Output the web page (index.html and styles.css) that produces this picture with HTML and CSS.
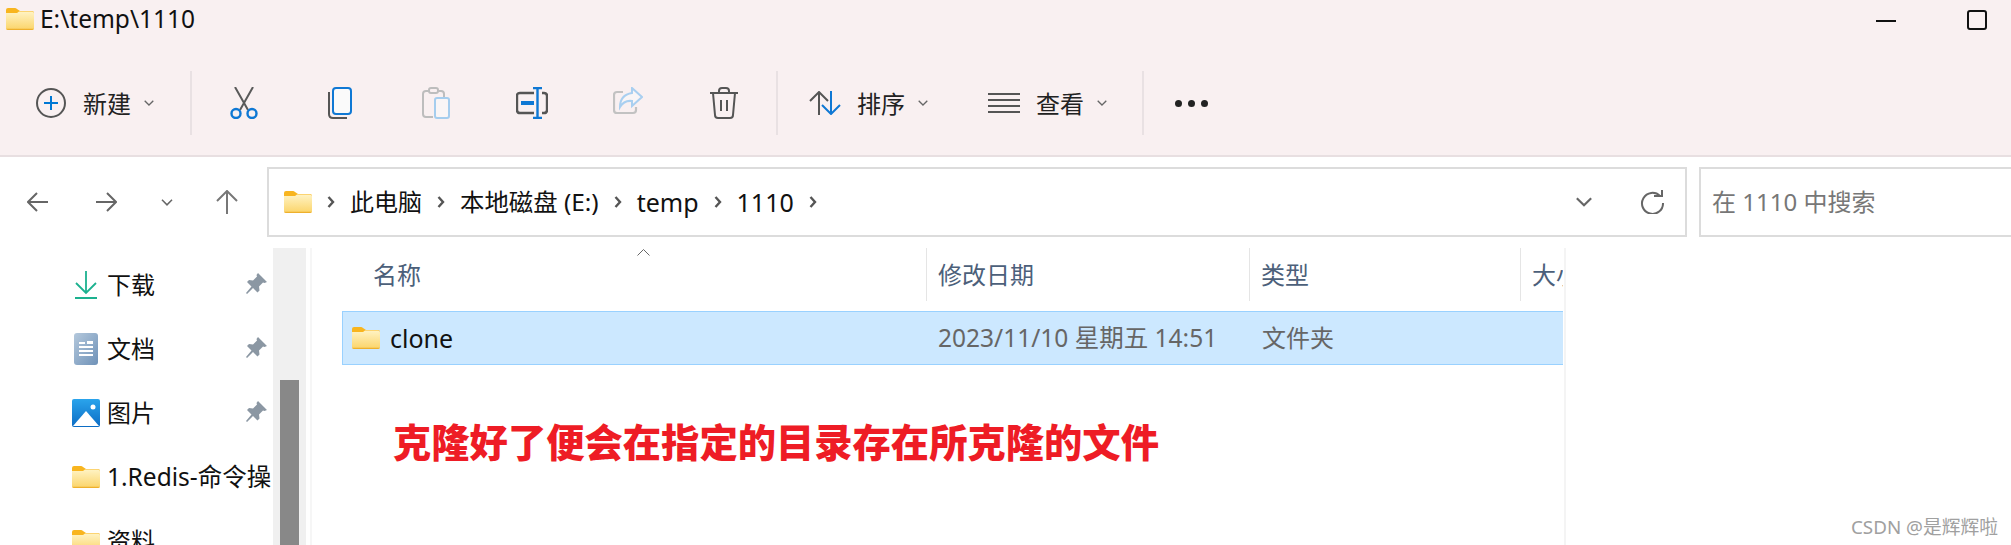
FILE: index.html
```html
<!DOCTYPE html>
<html lang="zh-CN">
<head>
<meta charset="utf-8">
<title>E:\temp\1110</title>
<link rel="stylesheet" href="styles.css">
</head>
<body>
<svg class="defs" width="0" height="0" aria-hidden="true">
  <defs>
    <linearGradient id="fg" x1="0" y1="0" x2="0" y2="1"><stop offset="0" stop-color="#fff3c4"/><stop offset="1" stop-color="#fbd468"/></linearGradient>
    <linearGradient id="dg" x1="0" y1="0" x2="1" y2="1"><stop offset="0" stop-color="#b4c8dc"/><stop offset="1" stop-color="#6f92b8"/></linearGradient>
    <linearGradient id="pg" x1="0" y1="0" x2="0" y2="1"><stop offset="0" stop-color="#2aa4ec"/><stop offset="1" stop-color="#0c6cc4"/></linearGradient>
    <symbol id="folder" viewBox="0 0 28 22">
      <path d="M0 2q0-2 2-2h7q1 0 2 1l3 2h12q2 0 2 2v3H0z" fill="#f8b51f"/>
      <path d="M0 5h11l2-1.500h13q2 0 2 2V20q0 2-2 2H2q-2 0-2-2z" fill="url(#fg)"/>
      <path d="M0 20.800h28V20q0 2-2 2H2q-2 0-2-2z" fill="#eeb02c"/>
    </symbol>
    <symbol id="pin" viewBox="0 0 22 22">
      <path d="M13 0l9 9-2.500 1-1.500-.5-4 4 .5 4-2 2-4.500-4.500L2 21l-1-1 5.500-6.500L2 9l2-2 4 .5 4-4-.5-1.500z" fill="#8b97a3"/>
    </symbol>
    <symbol id="chev" viewBox="0 0 10 6">
      <path d="M.7.7L5 5 9.300.7" fill="none" stroke="#666" stroke-width="1.300"/>
    </symbol>
    <symbol id="crumb" viewBox="0 0 8 12">
      <path d="M1.500 1l4.500 5-4.500 5" fill="none" stroke="#555" stroke-width="2.400"/>
    </symbol>
  </defs>
</svg>

<header class="ribbon">
  <div class="titlebar">
    <div class="title">
      <svg class="ic-folder"><use href="#folder"/></svg>
      <span>E:\temp\1110</span>
    </div>
    <div class="winctl">
      <span class="win-min"></span>
      <span class="win-max"></span>
    </div>
  </div>
  <div class="toolbar">
    <div class="tool-new">
      <svg width="30" height="30" viewBox="0 0 30 30"><circle cx="15" cy="15" r="14" fill="none" stroke="#555" stroke-width="2"/><path d="M15 8v14M8 15h14" stroke="#0078d4" stroke-width="2"/></svg>
      <span class="tool-label">新建</span>
      <svg class="tool-chev"><use href="#chev"/></svg>
    </div>
    <span class="tool-sep"></span>
    <div class="tool-icons">
      <span class="tool-cell"><svg width="28" height="32" viewBox="0 0 28 32"><path d="M5 0l13 23M23 0L10 23" fill="none" stroke="#5a5a5a" stroke-width="2"/><circle cx="6" cy="26.500" r="4.500" fill="none" stroke="#0f78d4" stroke-width="2.400"/><circle cx="22" cy="26.500" r="4.500" fill="none" stroke="#0f78d4" stroke-width="2.400"/></svg></span>
      <span class="tool-cell"><svg width="24" height="32" viewBox="0 0 24 32"><path d="M1 5v22q0 4 4 4h14" fill="none" stroke="#555" stroke-width="2"/><rect x="5" y="1" width="18" height="26" rx="3" fill="#fafafa" stroke="#0f78d4" stroke-width="2"/></svg></span>
      <span class="tool-cell"><svg width="28" height="32" viewBox="0 0 28 32"><path d="M11 30H4q-3 0-3-3V7q0-3 3-3h15q3 0 3 3v3" fill="none" stroke="#bdbdbd" stroke-width="2"/><rect x="7" y="1" width="9" height="5" rx="2" fill="#f9f0f1" stroke="#bdbdbd" stroke-width="2"/><rect x="13" y="11" width="14" height="20" rx="2" fill="#f9f5f6" stroke="#a5cdee" stroke-width="2"/></svg></span>
      <span class="tool-cell"><svg width="32" height="32" viewBox="0 0 32 32"><path d="M18 6H4q-3 0-3 3v14q0 3 3 3h14M26 6h2q3 0 3 3v14q0 3-3 3h-2" fill="none" stroke="#555" stroke-width="2.400"/><path d="M5 16h13" stroke="#0f78d4" stroke-width="4"/><path d="M17 1h9M21.500 1v30M17 31h9" fill="none" stroke="#0f78d4" stroke-width="2.400"/></svg></span>
      <span class="tool-cell"><svg width="30" height="28" viewBox="0 0 30 28"><path d="M10 5H4Q1 5 1 8v15q0 3 3 3h16q3 0 3-3v-3" fill="none" stroke="#c2c2c2" stroke-width="2.200"/><path d="M19 1l10 9-10 9v-5q-8-1-12 6 0-12 12-14z" fill="#f9f5f6" stroke="#a9cff0" stroke-width="2"/></svg></span>
      <span class="tool-cell"><svg width="30" height="32" viewBox="0 0 30 32"><path d="M1 6h28M10 6V4q0-3 3-3h4q3 0 3 3v2M4 6l2 22q0 3 3 3h12q3 0 3-3l2-22M12 13v11M18 13v11" fill="none" stroke="#555" stroke-width="2"/></svg></span>
    </div>
    <span class="tool-sep"></span>
    <div class="tool-sort">
      <svg width="32" height="24" viewBox="0 0 32 24"><path d="M10 24V1M1 10l9-9 9 9" fill="none" stroke="#555" stroke-width="2"/><path d="M22 0v23M13 14l9 9 9-9" fill="none" stroke="#0f78d4" stroke-width="2"/></svg>
      <span class="tool-label">排序</span>
      <svg class="tool-chev"><use href="#chev"/></svg>
    </div>
    <div class="tool-view">
      <svg width="32" height="20" viewBox="0 0 32 20"><path d="M0 1h32M0 7h32M0 13h32M0 19h32" stroke="#555" stroke-width="2"/></svg>
      <span class="tool-label">查看</span>
      <svg class="tool-chev"><use href="#chev"/></svg>
    </div>
    <span class="tool-sep tool-sep-end"></span>
    <div class="tool-more"><i></i><i></i><i></i></div>
  </div>
</header>

<nav class="navbar">
  <svg class="nav-back" width="21" height="20" viewBox="0 0 21 20"><path d="M21 10H2M10 1l-9 9 9 9" fill="none" stroke="#666" stroke-width="2"/></svg>
  <svg class="nav-fwd" width="21" height="20" viewBox="0 0 21 20"><path d="M0 10h19M11 1l9 9-9 9" fill="none" stroke="#666" stroke-width="2"/></svg>
  <svg class="nav-drop"><use href="#chev"/></svg>
  <svg class="nav-up" width="22" height="24" viewBox="0 0 22 24"><path d="M11 24V2M1 11l10-10 10 10" fill="none" stroke="#777" stroke-width="2"/></svg>
  <div class="address">
    <svg class="ic-folder"><use href="#folder"/></svg>
    <svg class="crumb-sep"><use href="#crumb"/></svg>
    <span>此电脑</span>
    <svg class="crumb-sep"><use href="#crumb"/></svg>
    <span class="crumb-drive">本地磁盘 (E:)</span>
    <svg class="crumb-sep"><use href="#crumb"/></svg>
    <span class="crumb-latin">temp</span>
    <svg class="crumb-sep"><use href="#crumb"/></svg>
    <span class="crumb-latin">1110</span>
    <svg class="crumb-sep"><use href="#crumb"/></svg>
    <span class="address-fill"></span>
    <svg class="addr-chev"><use href="#chev"/></svg>
    <svg class="addr-refresh" width="24" height="24" viewBox="0 0 24 24"><path d="M20 6a10.500 10.500 0 1 0 3 7" fill="none" stroke="#666" stroke-width="2"/><path d="M14 6h8V0" fill="none" stroke="#666" stroke-width="2"/></svg>
  </div>
  <div class="search">在 1110 中搜索</div>
</nav>

<main class="main">
  <aside class="sidebar">
    <div class="side-row">
      <span class="side-ic"><svg width="22" height="28" viewBox="0 0 22 28"><path d="M11 0v21M1 12l10 10 10-10" fill="none" stroke="#1cb18f" stroke-width="1.800"/><path d="M0 27h22" stroke="#1cb18f" stroke-width="2"/></svg></span>
      <span class="side-text">下载</span>
      <svg class="side-pin"><use href="#pin"/></svg>
    </div>
    <div class="side-row">
      <span class="side-ic"><svg width="24" height="32" viewBox="0 0 24 32"><rect width="24" height="32" rx="3" fill="url(#dg)"/><path d="M5 10h6M5 14h14M5 18h14M5 22h14" stroke="#fff" stroke-width="1.800"/><path d="M13 8h6v3h-6z" fill="#fff"/></svg></span>
      <span class="side-text">文档</span>
      <svg class="side-pin"><use href="#pin"/></svg>
    </div>
    <div class="side-row">
      <span class="side-ic"><svg width="28" height="28" viewBox="0 0 28 28"><rect width="28" height="28" rx="2" fill="url(#pg)"/><circle cx="21" cy="8" r="2.500" fill="#fff"/><path d="M1 27L14 12l13 15z" fill="#fff"/></svg></span>
      <span class="side-text">图片</span>
      <svg class="side-pin"><use href="#pin"/></svg>
    </div>
    <div class="side-row">
      <span class="side-ic"><svg class="ic-folder"><use href="#folder"/></svg></span>
      <span class="side-text side-long">1.Redis-命令操作</span>
    </div>
    <div class="side-row">
      <span class="side-ic"><svg class="ic-folder"><use href="#folder"/></svg></span>
      <span class="side-text">资料</span>
    </div>
  </aside>
  <div class="scrollbar"><div class="thumb"></div></div>
  <section class="list">
    <div class="cols list-head">
      <div class="head-cell head-name">名称<svg class="sort-caret" width="13" height="7" viewBox="0 0 13 7"><path d="M.5 6.500l6-6 6 6" fill="none" stroke="#666"/></svg></div>
      <div class="head-cell">修改日期</div>
      <div class="head-cell">类型</div>
      <div class="head-cell">大小</div>
    </div>
    <div class="cols list-row">
      <div class="cell-name"><svg class="ic-folder"><use href="#folder"/></svg><span>clone</span></div>
      <div class="cell-date">2023/11/10 星期五 14:51</div>
      <div class="cell-type">文件夹</div>
    </div>
    <p class="note">克隆好了便会在指定的目录存在所克隆的文件</p>
  </section>
</main>
<div class="watermark">CSDN @是辉辉啦</div>
</body>
</html>
```

FILE: styles.css
```css
* { box-sizing: border-box; }
html, body { margin: 0; padding: 0; height: 545px; overflow: hidden; background: #fff; }
body { position: relative; width: 2011px; font-family: "Noto Sans", "Noto Sans CJK SC", sans-serif; font-size: 24px; line-height: 32px; color: #1a1a1a; }
svg { display: block; flex: none; }
.defs { position: absolute; }
.ic-folder { width: 28px; height: 22px; }

.ribbon { height: 157px; background: #f9f0f1; border-bottom: 2px solid #e8dfe1; }
.titlebar { height: 40px; display: flex; justify-content: space-between; align-items: flex-start; }
.title { display: flex; align-items: center; gap: 6px; padding: 8px 0 0 6px; font-size: 24.500px; line-height: 22px; color: #111; }
.winctl { display: flex; align-items: flex-start; gap: 71px; padding: 10px 24px 0 0; }
.win-min { width: 20px; height: 2px; margin-top: 10px; background: #111; }
.win-max { width: 20px; height: 20px; border: 2px solid #111; border-radius: 3px; }

.toolbar { display: flex; align-items: center; height: 64px; margin-top: 31px; }
.tool-new { display: flex; align-items: center; width: 190px; padding-left: 36px; }
.tool-new .tool-label { margin-left: 17px; }
.tool-label { width: 48px; padding-top: 2px; white-space: nowrap; color: #222; }
.tool-chev { width: 10px; height: 6px; margin-left: 13px; }
.tool-sep { width: 2px; height: 64px; background: #e9e1e3; }
.tool-icons { display: flex; padding-left: 4px; width: 584px; }
.tool-cell { width: 96px; display: flex; justify-content: center; }
.tool-sort { display: flex; align-items: center; padding-left: 31px; width: 210px; }
.tool-sort .tool-label { margin-left: 16px; }
.tool-view { display: flex; align-items: center; width: 154px; }
.tool-view .tool-label { margin-left: 16px; }
.tool-more { display: flex; gap: 6px; padding-left: 31px; }
.tool-more i { width: 7px; height: 7px; border-radius: 50%; background: #222; }

.navbar { display: flex; align-items: center; height: 70px; margin-top: 10px; padding-left: 27px; }
.nav-back { margin-right: 48px; }
.nav-fwd { margin-right: 44px; }
.nav-drop { width: 12px; height: 7px; margin-right: 43px; }
.nav-up { margin-right: 29px; }
.address { display: flex; flex: none; align-items: center; width: 1420px; height: 70px; padding-left: 15px; gap: 15px; border: 2px solid #dcdcdc; color: #111; }
.address > span { white-space: nowrap; }
.crumb-drive { font-size: 24.400px; }
.crumb-latin { font-size: 25px; }
.crumb-sep { width: 8px; height: 12px; }
.address-fill { flex: 1; }
.addr-chev { width: 20px; height: 10px; margin-right: 31px; }
.addr-refresh { margin-right: 21px; }
.search { flex: none; width: 340px; height: 70px; margin-left: 12px; padding-left: 11px; border: 2px solid #dcdcdc; border-right: 0; line-height: 66px; color: #777; white-space: nowrap; }

.main { display: flex; height: 297px; margin-top: 11px; }
.sidebar { width: 273px; padding-top: 5px; overflow: hidden; }
.side-row { display: flex; align-items: center; height: 64px; padding-left: 72px; padding-right: 2px; }
.side-ic { width: 28px; margin-right: 7px; margin-top: -1px; display: flex; justify-content: center; flex: none; }
.side-text { flex: 1; min-width: 0; overflow: hidden; white-space: nowrap; color: #111; }
.side-long { font-size: 24.500px; }
.side-pin { width: 22px; height: 22px; margin-right: 4px; margin-top: -2px; }
.scrollbar { width: 33px; padding-left: 7px; background: #f0f0f0; }
.thumb { width: 19px; height: 165px; margin-top: 132px; background: #888; }

.list { width: 1256px; margin-left: 4px; border-left: 2px solid #f6f6f6; border-right: 2px solid #f4f4f4; padding-left: 30px; }
.cols { display: grid; grid-template-columns: 584px 323px 271px 43px; }
.list-head { height: 51px; margin-bottom: 12px; }
.head-cell { padding-left: 11px; border-left: 1px solid #e5e5e5; line-height: 53px; color: #4c607a; overflow: hidden; white-space: nowrap; }
.head-name { position: relative; padding-left: 31px; border-left: 0; overflow: visible; }
.sort-caret { position: absolute; left: 295px; top: 1px; }
.list-row { height: 54px; width: 1221px; background: #cce8ff; border: 1px solid #99d1ff; border-width: 1px 0 1px 1px; align-items: center; color: #666; }
.cell-name { display: flex; align-items: center; gap: 10px; padding-left: 9px; font-size: 25px; color: #111; }
.cell-date { padding-left: 11px; font-size: 24.500px; white-space: nowrap; }
.cell-type { padding-left: 12px; white-space: nowrap; }
.note { margin: 54px 0 0 51px; font-size: 38.300px; line-height: 46px; font-weight: 900; color: #ee1c25; white-space: nowrap; }
.watermark { position: absolute; left: 1851px; top: 516px; font-size: 18.800px; line-height: 22px; color: #a0a0a0; white-space: nowrap; }
```
